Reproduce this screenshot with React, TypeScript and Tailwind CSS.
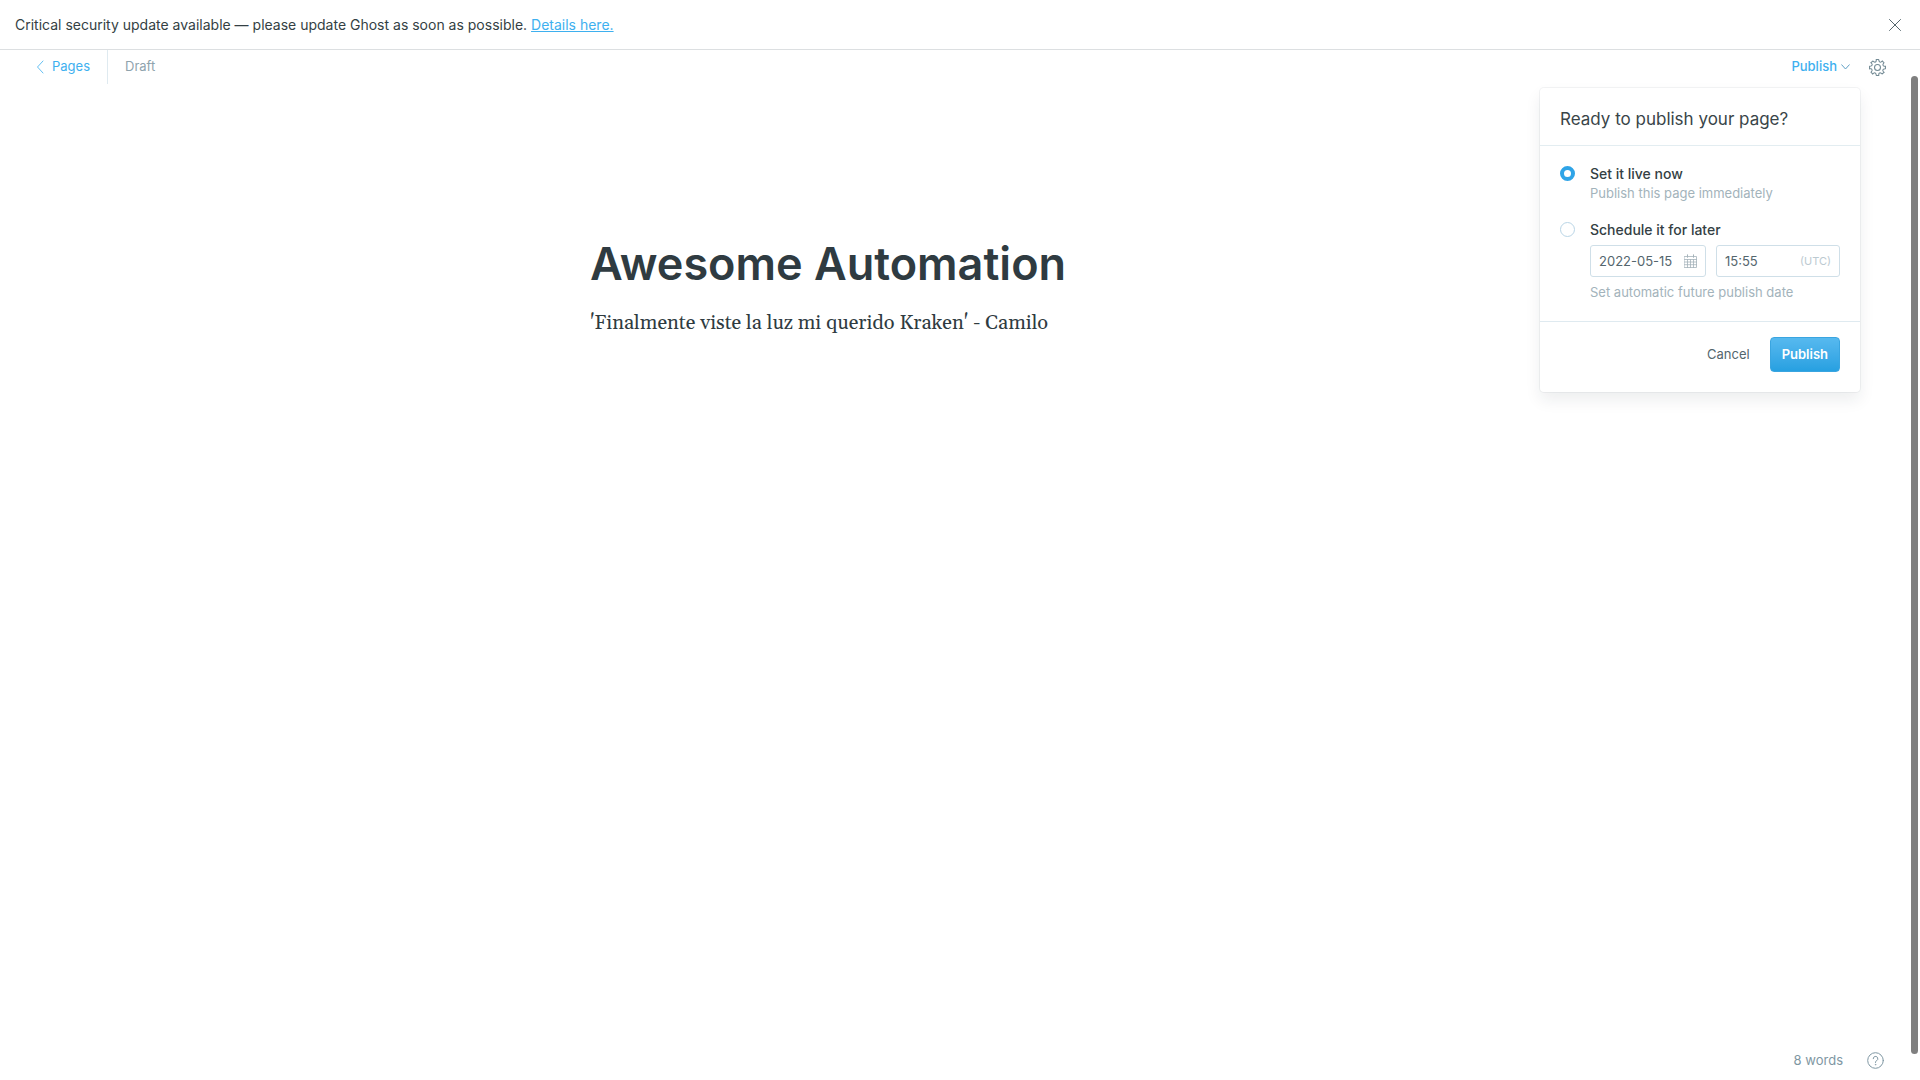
import { useState } from "react";

const iconBase = { fill: "none", strokeLinecap: "round", strokeLinejoin: "round" } as const;

function CloseIcon() {
  return (
    <svg viewBox="0 0 12 12" className="size-3" stroke="currentColor" {...iconBase} aria-hidden="true">
      <path d="M.5.5l11 11M11.5.5l-11 11" />
    </svg>
  );
}

function ArrowLeftIcon() {
  return (
    <svg viewBox="0 0 8 14" className="h-3.5 w-2" strokeWidth=".8" stroke="currentColor" {...iconBase} aria-hidden="true">
      <path d="M7 1L1.500 7L7 13" />
    </svg>
  );
}

function ArrowDownIcon() {
  return (
    <svg viewBox="0 0 9 6" className="h-1.5 w-[9px] text-[#5f9fc4]" stroke="currentColor" {...iconBase} aria-hidden="true">
      <path d="M.7.8l3.800 4.200L8.300.8" />
    </svg>
  );
}

const GEAR_TEETH = [0, 45, 90, 135, 180, 225, 270, 315];

function GearIcon() {
  return (
    <svg viewBox="-12 -12 24 24" className="size-[17px]" strokeWidth="1.5" stroke="currentColor" {...iconBase} aria-hidden="true">
      <circle r="4.200" />
      {GEAR_TEETH.map((angle) => (
        <path
          key={angle}
          transform={`rotate(${angle})`}
          d="M-1.700 -11.200H1.700L2.100 -9.200C2.500 -7.600 4.200 -7 5.300 -7.900L6.700 -9.100"
        />
      ))}
    </svg>
  );
}

function CalendarIcon() {
  return (
    <svg viewBox="0 0 13 14" className="h-3.5 w-[13px] text-[#a5b3ba]" stroke="currentColor" {...iconBase} aria-hidden="true">
      <path d="M.5 2.500h12v11H.5zM.5 5.500h12M.5 8h12M.5 10.700h12M3.500 5.500v8M6.500 5.500v8M9.500 5.500v8" strokeWidth=".8" />
      <path d="M3.500.8v2.500M9.500.8v2.500" />
    </svg>
  );
}

function HelpIcon() {
  return (
    <svg viewBox="0 0 17 17" className="size-[17px]" stroke="currentColor" {...iconBase} aria-hidden="true">
      <circle cx="8.500" cy="8.500" r="7.800" />
      <path d="M6.200 6.700a2.300 2.300 0 1 1 3.400 2c-.7.400-1.100.8-1.100 1.500v.4" />
      <circle cx="8.500" cy="12.700" r=".4" fill="currentColor" strokeWidth=".5" />
    </svg>
  );
}

const radioClass =
  "mt-0.5 size-[15px] shrink-0 appearance-none rounded-full border border-[#b9d5e6] bg-white checked:border-4 checked:border-[#2fa4e7]";

function PublishMenu() {
  const [mode, setMode] = useState("now");
  return (
    <form
      onSubmit={(e) => e.preventDefault()}
      className="absolute top-[31px] right-[-10px] z-10 w-80 rounded bg-white shadow-[0_0_0_1px_rgba(99,114,130,0.08),0_8px_16px_rgba(27,39,51,0.08)]"
    >
      <h2 className="border-b border-[#e3edf1] px-5 pt-[19px] pb-3.5 text-[17px] leading-6 text-[#394549]">
        Ready to publish your page?
      </h2>
      <div className="flex flex-col gap-[18px] border-b border-[#dfeaf0] px-5 pt-[18px] pb-5">
        <div className="flex gap-[15px]">
          <input id="now" type="radio" name="mode" checked={mode === "now"} onChange={() => setMode("now")} className={radioClass} />
          <div>
            <label htmlFor="now" className="block text-sm leading-5 font-medium text-[#343f44]">Set it live now</label>
            <p className="text-[13px] leading-[18px] text-[#a3b3bb]">Publish this page immediately</p>
          </div>
        </div>
        <div className="flex gap-[15px]">
          <input id="later" type="radio" name="mode" checked={mode === "later"} onChange={() => setMode("later")} className={radioClass} />
          <div className="min-w-0 flex-1">
            <label htmlFor="later" className="block text-sm leading-5 font-medium text-[#343f44]">Schedule it for later</label>
            <div className="mt-[5px] flex gap-2.5">
              <label className="flex h-8 w-[116px] items-center rounded-[3px] border border-[#cfdfe8] px-2">
                <input aria-label="Publish date" defaultValue="2022-05-15" className="min-w-0 flex-1 bg-transparent text-[13px] text-[#54666d] outline-none" />
                <CalendarIcon />
              </label>
              <label className="flex h-8 min-w-0 flex-1 items-center rounded-[3px] border border-[#cfdfe8] px-2">
                <input aria-label="Publish time" defaultValue="15:55" className="min-w-0 flex-1 bg-transparent text-[13px] text-[#54666d] outline-none" />
                <span className="text-[11px] text-[#bccad1]">(UTC)</span>
              </label>
            </div>
            <p className="mt-1.5 text-[13px] leading-[18px] text-[#a3b3bb]">Set automatic future publish date</p>
          </div>
        </div>
      </div>
      <div className="flex items-center justify-end gap-5 px-5 pt-[15px] pb-5">
        <button type="button" className="text-[13px] text-[#54666d]">Cancel</button>
        <button type="submit" className="h-[35px] rounded border border-[#3aa5e0] bg-linear-to-b from-[#56b9ef] to-[#26a0e1] px-[11px] text-[13px] font-semibold text-white">
          Publish
        </button>
      </div>
    </form>
  );
}

export default function App() {
  return (
    <div className="relative flex min-h-screen flex-col bg-white font-['Inter',sans-serif] text-[13px]">
      <aside className="flex h-[50px] items-center justify-between border-b border-[#dcdfe1] pr-[19px] pl-[15px]">
        <p className="text-sm text-[#343f44]">
          Critical security update available — please update Ghost as soon as possible.{" "}
          <a href="#details" className="text-[#3eb0ef] underline">Details here.</a>
        </p>
        <button type="button" aria-label="Close" className="text-[#54666d]"><CloseIcon /></button>
      </aside>

      <header className="flex h-[34px] items-center justify-between pr-[34px] pl-9">
        <div className="flex h-full items-center">
          <a href="#pages" className="flex h-full items-center gap-2 border-r border-[#dfeaf0] pr-[17px] text-[#3eb0ef]">
            <ArrowLeftIcon />
            Pages
          </a>
          <span className="pl-[17px] text-[#8fa3ad]">Draft</span>
        </div>
        <div className="flex items-center gap-[19px]">
          <div className="relative">
            <button type="button" className="flex items-center gap-1 font-medium text-[#3eb0ef]">
              Publish
              <ArrowDownIcon />
            </button>
            <PublishMenu />
          </div>
          <button type="button" aria-label="Settings" className="text-[#738a94]"><GearIcon /></button>
        </div>
      </header>

      <main className="mx-auto w-full max-w-[740px] flex-1 pt-[150px] text-[#2f3b41]">
        <h1 className="text-[45px] leading-[60px] font-semibold">Awesome Automation</h1>
        <p className="mt-[13px] font-['Gelasio','Georgia','Liberation_Serif',serif] text-xl leading-8">
          'Finalmente viste la luz mi querido Kraken' - Camilo
        </p>
      </main>

      <footer className="flex items-center justify-end gap-6 pr-9 pb-2.5 text-[#7f97a3]">
        <span>8 words</span>
        <button type="button" aria-label="Help"><HelpIcon /></button>
      </footer>

      <div className="absolute top-[76px] right-0.5 bottom-[26px] w-[7px] rounded-full bg-[#7f7f7f]" aria-hidden="true" />
    </div>
  );
}
